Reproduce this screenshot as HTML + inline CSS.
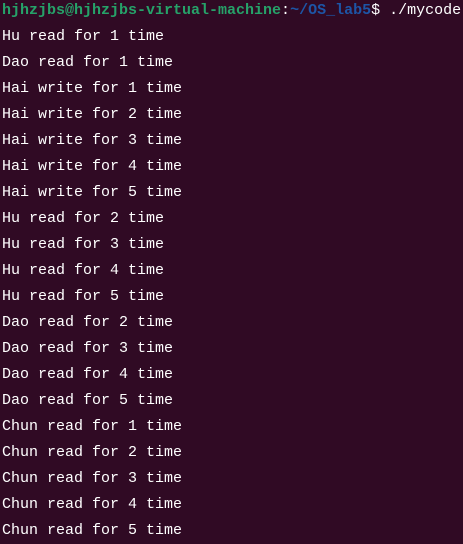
<!DOCTYPE html>
<html><head><style>
html,body{margin:0;padding:0;background:#300a24;width:463px;height:544px;overflow:hidden}
pre{margin:0;padding:0 0 0 2px;font-family:"Liberation Mono","DejaVu Sans Mono",monospace;font-size:15px;line-height:26px;color:#ffffff;position:relative;top:-2px;white-space:pre}
.g{color:#26a269;font-weight:bold}.b{color:#1d55a6;font-weight:bold}
</style></head><body><pre><span class="g">hjhzjbs@hjhzjbs-virtual-machine</span>:<span class="b">~/OS_lab5</span>$ ./mycode
Hu read for 1 time
Dao read for 1 time
Hai write for 1 time
Hai write for 2 time
Hai write for 3 time
Hai write for 4 time
Hai write for 5 time
Hu read for 2 time
Hu read for 3 time
Hu read for 4 time
Hu read for 5 time
Dao read for 2 time
Dao read for 3 time
Dao read for 4 time
Dao read for 5 time
Chun read for 1 time
Chun read for 2 time
Chun read for 3 time
Chun read for 4 time
Chun read for 5 time</pre></body></html>
